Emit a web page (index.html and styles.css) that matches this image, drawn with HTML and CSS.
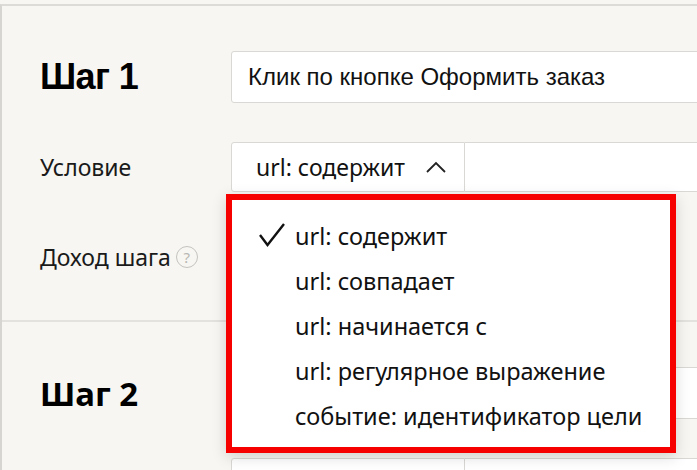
FILE: index.html
```html
<!DOCTYPE html>
<html lang="ru">
<head>
    <meta charset="UTF-8">
    <meta name="viewport" content="width=device-width, initial-scale=1.0">
    <title>Цель: составная</title>
    <link rel="stylesheet" href="styles.css">
</head>
<body>
    <div class="panel">
        <section class="step">
            <div class="row">
                <h2 class="step-title step-title-first">Шаг 1</h2>
                <div class="field field-arial">Клик по кнопке Оформить заказ</div>
            </div>
            <div class="row row-gap">
                <span class="label">Условие</span>
                <div class="combo">
                    <div class="select">
                        <span class="select-value">url: содержит</span>
                        <svg class="chevron" width="22" height="14" viewBox="0 0 22 14">
                            <path d="M2 12 L11 3 L20 12" fill="none" stroke="#222" stroke-width="1.8"/>
                        </svg>
                    </div>
                    <div class="field field-rest"></div>

                    <ul class="menu">
                        <li class="menu-item selected">
                            <svg class="check" width="28" height="26" viewBox="0 0 28 26">
                                <path d="M2 13 L9.5 23 L26 2" fill="none" stroke="#111" stroke-width="2.4"/>
                            </svg>
                            url: содержит
                        </li>
                        <li class="menu-item">url: совпадает</li>
                        <li class="menu-item">url: начинается с</li>
                        <li class="menu-item">url: регулярное выражение</li>
                        <li class="menu-item">событие: идентификатор цели</li>
                    </ul>
                </div>
            </div>
            <div class="row row-gap row-income">
                <span class="label">Доход шага<span class="hint">?</span></span>
            </div>
        </section>

        <section class="step">
            <div class="row">
                <h2 class="step-title">Шаг 2</h2>
                <div class="field"></div>
            </div>
            <div class="row row-gap">
                <span class="label"></span>
                <div class="combo">
                    <div class="select"></div>
                    <div class="field field-rest"></div>
                </div>
            </div>
        </section>
    </div>
</body>
</html>
```

FILE: styles.css
```css
* {
    margin: 0;
    padding: 0;
    box-sizing: border-box;
}

html, body {
    height: 100%;
    overflow: hidden;
}

body {
    font-family: 'Noto Sans', 'Open Sans', sans-serif;
    background: #f7f6f2;
    color: #1a1a1a;
    padding-top: 4px;
}

.panel {
    border-top: 2px solid #dcdbd7;
    border-left: 2px solid #d6d5d1;
    min-height: 100%;
    width: 900px;
}

.step {
    padding: 45px 0 43px 38px;
    border-bottom: 2px solid #e3e2de;
}

.row {
    display: flex;
    align-items: center;
}

.row-gap {
    margin-top: 39px;
}

.row-income {
    margin-top: 45px;
    height: 40px;
}

.step-title {
    width: 191px;
    flex-shrink: 0;
    font-size: 33px;
    font-weight: 700;
    color: #000;
}

.step-title-first {
    font-family: 'Liberation Sans', Arial, sans-serif;
    font-size: 36px;
    letter-spacing: -0.6px;
}

.label {
    width: 191px;
    flex-shrink: 0;
    font-size: 23px;
    display: flex;
    align-items: center;
}

.hint {
    width: 22px;
    height: 22px;
    margin-left: 5px;
    border: 1.5px solid #c4c3bf;
    border-radius: 50%;
    color: #b8b7b3;
    font-size: 15px;
    display: flex;
    align-items: center;
    justify-content: center;
}

.field {
    width: 600px;
    flex-shrink: 0;
    height: 52px;
    background: #fff;
    border: 1px solid #d9d8d4;
    border-radius: 3px 0 0 3px;
    padding: 0 16px;
    display: flex;
    align-items: center;
    font-size: 21px;
    color: #111;
}

.field-arial {
    font-family: 'Liberation Sans', Arial, sans-serif;
    font-size: 24px;
}

.combo {
    position: relative;
    display: flex;
    flex-shrink: 0;
}

.select {
    width: 234px;
    flex-shrink: 0;
    height: 50px;
    background: #fff;
    border: 1px solid #d9d8d4;
    border-radius: 3px 0 0 3px;
    padding-left: 24px;
    display: flex;
    align-items: center;
    font-size: 23px;
    color: #111;
}

.select-value {
    white-space: nowrap;
}

.chevron {
    margin-left: 20px;
    flex-shrink: 0;
}

.field-rest {
    height: 50px;
    width: 400px;
    border-left: none;
    border-radius: 0;
}

/* open dropdown of the condition select */
.menu {
    position: absolute;
    left: -5px;
    top: 52px;
    width: 450px;
    height: 259px;
    list-style: none;
    background: #fff;
    border: 6px solid #f60000;
    box-shadow: 0 4px 14px rgba(0, 0, 0, 0.15);
    padding: 14px 0 0 63px;
    z-index: 10;
}

.menu-item {
    position: relative;
    height: 45px;
    line-height: 45px;
    font-size: 23.5px;
    color: #111;
    white-space: nowrap;
}

.check {
    position: absolute;
    left: -37px;
    top: 8px;
}
```
